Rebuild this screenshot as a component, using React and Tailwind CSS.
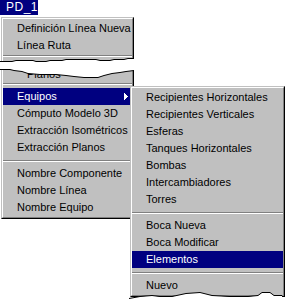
import React from 'react';

function Arrow() {
  return (
    <svg width="4" height="7" viewBox="0 0 4 7" className="mr-[4px]" shapeRendering="crispEdges">
      <path d="M0 0h1v7h-1z M1 1h1v5h-1z M2 2h1v3h-1z M3 3h1v1h-1z" fill="currentColor" />
    </svg>
  );
}

function Item({ label, active, arrow }) {
  return (
    <div
      className={`flex h-[17px] items-center justify-between whitespace-nowrap pl-[14px] leading-[17px] ${
        active ? 'bg-[#000080] text-white' : 'text-black'
      }`}
    >
      <span>{label}</span>
      {arrow && <Arrow />}
    </div>
  );
}

function Sep({ className }) {
  return (
    <div className={className}>
      <div className="h-px bg-[#808080]" />
      <div className="h-px bg-white" />
    </div>
  );
}

function Frame({ className, children }) {
  return (
    <div className={`border border-t-[#c0c0c0] border-l-[#c0c0c0] border-r-black border-b-black ${className}`}>
      <div className="border border-t-white border-l-white border-r-[#808080] border-b-[#808080] bg-[#c0c0c0] py-[1px]">
        {children}
      </div>
    </div>
  );
}

const upper = [
  [0, 61.5], [12, 61.5], [16, 60.5], [33, 60.5], [36, 61.5], [46, 61.5], [50, 60.5], [62, 60.5],
  [66, 59.5], [96, 59.5], [100, 60.5], [110, 60.5], [114, 59.5], [124, 59.5], [128, 58.5], [134, 58.5],
];
const lower = [
  [0, 69.5], [10, 69.5], [14, 70.5], [22, 71.5], [28, 73.5], [40, 74.5], [56, 74.5], [66, 75.5],
  [74, 76.5], [84, 77.5], [98, 77.5], [104, 75.5], [112, 73.5], [120, 72.5], [126, 71.5], [134, 70.5],
];
const bottom = [
  [129, 298.5], [140, 296.5], [152, 295.5], [160, 296.5], [172, 296.5], [186, 293.5], [200, 292.5],
  [212, 295.5], [230, 296.5], [248, 296.5], [258, 295.5], [262, 292.5], [270, 292.5], [274, 295.5], [282, 295.5],
];
const pts = (a) => a.map((p) => p.join(',')).join(' ');

export default function App() {
  return (
    <div className="relative h-[301px] w-[286px] overflow-hidden bg-white font-['Liberation_Sans',Arial,sans-serif] text-[11px]">
      <div className="h-[15px] w-[38px] bg-[#000080] pl-[6px] text-[12px] leading-[15px] tracking-[0.5px] text-white">PD_1</div>

      <Frame className="ml-[1px] mt-[2px] w-[133px]">
        <Item label="Definición Línea Nueva" />
        <Item label="Línea Ruta" />
        <Sep className="h-[3px] pt-[1px]" />
        <div className="h-[9px]" />
        <div className="h-[17px] whitespace-nowrap pl-[24px] leading-[17px]">Planos</div>
        <Sep className="h-[5px]" />
        <Item label="Equipos" active arrow />
        <Item label="Cómputo Modelo 3D" />
        <Item label="Extracción Isométricos" />
        <Item label="Extracción Planos" />
        <Sep className="h-[9px] pt-[4px]" />
        <Item label="Nombre Componente" />
        <Item label="Nombre Línea" />
        <Item label="Nombre Equipo" />
      </Frame>

      <Frame className="absolute left-[130px] top-[86px] w-[155px]">
        <Item label="Recipientes Horizontales" />
        <Item label="Recipientes Verticales" />
        <Item label="Esferas" />
        <Item label="Tanques Horizontales" />
        <Item label="Bombas" />
        <Item label="Intercambiadores" />
        <Item label="Torres" />
        <Sep className="h-[9px] pt-[4px]" />
        <Item label="Boca Nueva" />
        <Item label="Boca Modificar" />
        <Item label="Elementos" active />
        <Sep className="h-[9px] pt-[4px]" />
        <Item label="Nuevo" />
      </Frame>

      {/* torn paper break in the main menu */}
      <svg className="absolute left-0 top-[55px]" width="136" height="26" viewBox="0 55 136 26">
        <polygon points={pts([...upper, ...[...lower].reverse()])} fill="#fff" />
        <polyline points={pts(upper)} fill="none" stroke="#000" strokeWidth="1" />
        <polyline points={pts(lower)} fill="none" stroke="#000" strokeWidth="1" />
      </svg>

      {/* torn bottom of the submenu */}
      <svg className="absolute left-[128px] top-[288px]" width="158" height="13" viewBox="128 288 158 13">
        <polygon points={pts([...bottom, [282, 301], [129, 301]])} fill="#fff" />
        <polyline points={pts(bottom)} fill="none" stroke="#000" strokeWidth="1" />
      </svg>
    </div>
  );
}
